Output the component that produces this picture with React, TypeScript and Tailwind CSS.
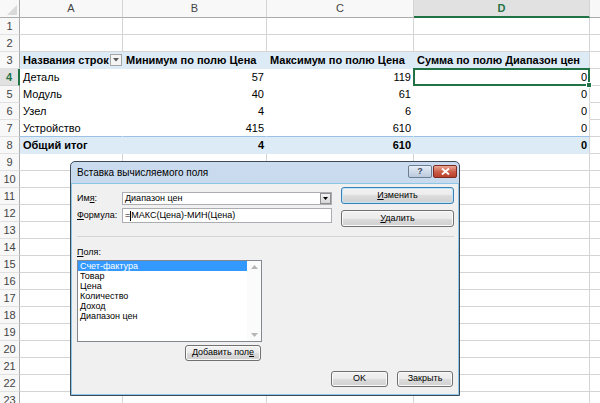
import React from 'react';

const XL = "font-['Liberation_Sans',Arial,sans-serif] text-[11px]";
const DLG = "font-['Liberation_Sans',Tahoma,sans-serif] text-[9px]";

const colW = ['w-[103px]', 'w-[144px]', 'w-[147px]', 'w-[176px]'];
const letters = ['A', 'B', 'C', 'D'];

const pivot: Record<number, string[]> = {
  3: ['Названия строк', 'Минимум по полю Цена', 'Максимум по полю Цена', 'Сумма по полю Диапазон цен'],
  4: ['Деталь', '57', '119', '0'],
  5: ['Модуль', '40', '61', '0'],
  6: ['Узел', '4', '6', '0'],
  7: ['Устройство', '415', '610', '0'],
  8: ['Общий итог', '4', '610', '0'],
};

const fields = ['Счет-фактура', 'Товар', 'Цена', 'Количество', 'Доход', 'Диапазон цен'];

function HeaderRow() {
  return (
    <div className="flex h-[18px]">
      <div className="w-[20px] shrink-0 border-r border-b border-[#ababab] bg-[#f8f8f8] flex items-end justify-end pr-[2px] pb-[2px]">
        <svg width="10" height="10" viewBox="0 0 10 10">
          <path d="M10 0 L10 10 L0 10 Z" fill="#dadada" />
        </svg>
      </div>
      {letters.map((l, i) =>
        l === 'D' ? (
          <div
            key={l}
            className={`${colW[i]} shrink-0 border-r border-r-[#d4d4d4] border-b-2 border-b-[#217346] bg-[#e1e1e1] text-center leading-[16px] font-bold text-[#217346]`}
          >
            {l}
          </div>
        ) : (
          <div
            key={l}
            className={`${colW[i]} shrink-0 border-r border-r-[#d4d4d4] border-b border-b-[#ababab] bg-[#f8f8f8] text-center leading-[17px] text-[#444]`}
          >
            {l}
          </div>
        )
      )}
      <div className="flex-1 border-b border-[#ababab] bg-[#f8f8f8]" />
    </div>
  );
}

function FilterButton() {
  return (
    <span className="w-[12px] h-[12px] border border-[#a6a6a6] bg-[#f4f4f4] flex items-center justify-center">
      <svg width="6" height="4" viewBox="0 0 6 4">
        <path d="M0 0 L6 0 L3 3.5 Z" fill="#595959" />
      </svg>
    </span>
  );
}

function Row({ n }: { n: number }) {
  const data = pivot[n];
  const isPivot = !!data;
  const band = n === 3 || n === 8;
  const sel = n === 4;

  return (
    <div className="flex h-[17px]">
      <div
        className={`w-[20px] shrink-0 border-b text-center leading-[16px] ${
          sel
            ? 'bg-[#e1e1e1] border-r-2 border-r-[#217346] border-b-[#d4d4d4] text-[#217346] font-bold'
            : 'bg-[#f8f8f8] border-r border-r-[#ababab] border-b-[#e1e1e1] text-[#444]'
        }`}
      >
        {n}
      </div>
      {colW.map((w, i) => {
        const text = data ? data[i] : '';
        const right = isPivot && n !== 3 && i > 0;
        const rightBorder = isPivot && i < 3 ? 'border-r-transparent' : 'border-r-[#d4d4d4]';
        const bottomBorder =
          n === 7 ? 'border-b-[#9bc2e6]' : isPivot ? 'border-b-transparent' : 'border-b-[#d4d4d4]';
        return (
          <div
            key={i}
            className={`${w} shrink-0 relative border-r border-b ${rightBorder} ${bottomBorder} ${
              band ? 'bg-[#ddebf7] font-bold' : ''
            } ${right ? 'text-right pr-[2px]' : 'pl-[3px]'} leading-[16px] whitespace-nowrap text-black`}
          >
            {n === 3 && i === 0 ? (
              <div className="flex items-center justify-between h-full">
                <span>{text}</span>
                <FilterButton />
              </div>
            ) : (
              text
            )}
            {sel && i === 3 && (
              <>
                <span className="absolute -left-[1px] -top-[1px] -right-[1px] -bottom-[1px] border-2 border-[#217346] z-10" />
                <span className="absolute -right-[3px] -bottom-[3px] w-[6px] h-[6px] bg-[#217346] border border-white z-20" />
              </>
            )}
          </div>
        );
      })}
      <div className="flex-1 border-b border-[#d4d4d4]" />
    </div>
  );
}

function WinButton({
  children,
  className = '',
  def = false,
}: {
  children: React.ReactNode;
  className?: string;
  def?: boolean;
}) {
  return (
    <div
      className={`flex items-center justify-center rounded-[3px] border text-black ${
        def
          ? 'border-[#3c7fb1] shadow-[inset_0_0_0_1px_#bfe6fa]'
          : 'border-[#707070] shadow-[inset_0_0_0_1px_#fbfbfb]'
      } bg-[linear-gradient(#f2f2f2_0%,#ebebeb_50%,#dddddd_50%,#cfcfcf_100%)] ${className}`}
    >
      {children}
    </div>
  );
}

function Dialog() {
  return (
    <div
      className={`absolute left-[70px] top-[161px] w-[390px] h-[235px] flex flex-col border border-[#3e4a58] rounded-t-[5px] bg-[linear-gradient(#cadbef,#b7cce6)] ${DLG}`}
    >
      {/* title bar */}
      <div className="h-[21px] shrink-0 flex items-start pl-[6px] pr-[2px]">
        <span className="text-black text-[10px] leading-[21px]">Вставка вычисляемого поля</span>
        <div className="ml-auto mt-[3px] flex gap-[1px]">
          <div className="w-[24px] h-[13px] rounded-[2px] border border-[#6d7d92] bg-[linear-gradient(#e6eef8,#b9c9dd)] flex items-center justify-center text-[9px] leading-none font-bold text-[#3c4a5e]">
            ?
          </div>
          <div className="w-[24px] h-[13px] rounded-[2px] border border-[#7b2b22] bg-[linear-gradient(#eba894,#c95a44_55%,#b8412c)] flex items-center justify-center">
            <svg width="9" height="7" viewBox="0 0 9 7">
              <path d="M1 0.5 L8 6.5 M8 0.5 L1 6.5" stroke="#fff" strokeWidth="1.8" />
            </svg>
          </div>
        </div>
      </div>

      {/* body */}
      <div className="flex-1 flex flex-col border border-[#8cc7e6] bg-[#f0f0f0] pl-[5px] pr-[4px] text-black">
        <div className="flex pt-[3px]">
          <div className="w-[255px] pt-[5px] flex flex-col gap-[3px]">
            <div className="flex items-center h-[13px]">
              <span className="w-[45px]">
                Им<span className="underline">я</span>:
              </span>
              <div className="w-[210px] h-[13px] border border-[#abadb3] bg-white flex items-center">
                <span className="pl-[2px] flex-1 leading-none">Диапазон цен</span>
                <div className="w-[11px] h-[11px] border border-[#8f8f8f] bg-[linear-gradient(#f4f4f4,#d6d6d6)] flex items-center justify-center">
                  <svg width="5" height="3" viewBox="0 0 5 3">
                    <path d="M0 0 L5 0 L2.5 3 Z" fill="#000" />
                  </svg>
                </div>
              </div>
            </div>
            <div className="flex items-center h-[15px]">
              <span className="w-[45px]">
                <span className="underline">Ф</span>ормула:
              </span>
              <div className="w-[210px] h-[15px] border border-[#abadb3] bg-white flex items-center pl-[2px] leading-none">
                <span>=</span>
                <span className="inline-block w-[1px] h-[10px] bg-black" />
                <span>МАКС(Цена)-МИН(Цена)</span>
              </div>
            </div>
          </div>
          <div className="ml-auto flex flex-col gap-[6px]">
            <WinButton def className="w-[113px] h-[17px]">
              <span>
                <span className="underline">И</span>зменить
              </span>
            </WinButton>
            <WinButton className="w-[113px] h-[17px]">
              <span>
                <span className="underline">У</span>далить
              </span>
            </WinButton>
          </div>
        </div>

        <div className="mt-[9px] h-[1px] bg-[#d5d5d5]" />

        <div className="mt-[10px] leading-[10px]">
          <span className="underline">П</span>оля:
        </div>

        <div className="mt-[3px] w-[185px] h-[82px] border border-[#828790] bg-white flex">
          <div className="flex-1 flex flex-col">
            {fields.map((f, i) => (
              <div
                key={f}
                className={`h-[10px] leading-[10px] pl-[2px] ${i === 0 ? 'bg-[#3399ff] text-white' : ''}`}
              >
                {f}
              </div>
            ))}
          </div>
          <div className="w-[14px] flex flex-col justify-between items-center py-[4px] bg-[#fbfbfb]">
            <svg width="7" height="4" viewBox="0 0 7 4">
              <path d="M0 4 L7 4 L3.5 0 Z" fill="#b5b5b5" />
            </svg>
            <svg width="7" height="4" viewBox="0 0 7 4">
              <path d="M0 0 L7 0 L3.5 4 Z" fill="#b5b5b5" />
            </svg>
          </div>
        </div>

        <div className="mt-[3px] w-[185px] flex justify-end pr-[1px]">
          <WinButton className="w-[76px] h-[16px]">
            <span>
              Добавить пол<span className="underline">е</span>
            </span>
          </WinButton>
        </div>

        <div className="mt-[10px] flex justify-end gap-[9px] pr-[1px]">
          <WinButton className="w-[57px] h-[16px]">OK</WinButton>
          <WinButton className="w-[56px] h-[16px]">Закрыть</WinButton>
        </div>
      </div>
    </div>
  );
}

export default function App() {
  const rows = Array.from({ length: 23 }, (_, i) => i + 1);
  return (
    <div className={`relative w-[600px] h-[403px] overflow-hidden bg-white ${XL}`}>
      <HeaderRow />
      {rows.map((n) => (
        <Row key={n} n={n} />
      ))}
      <Dialog />
    </div>
  );
}
